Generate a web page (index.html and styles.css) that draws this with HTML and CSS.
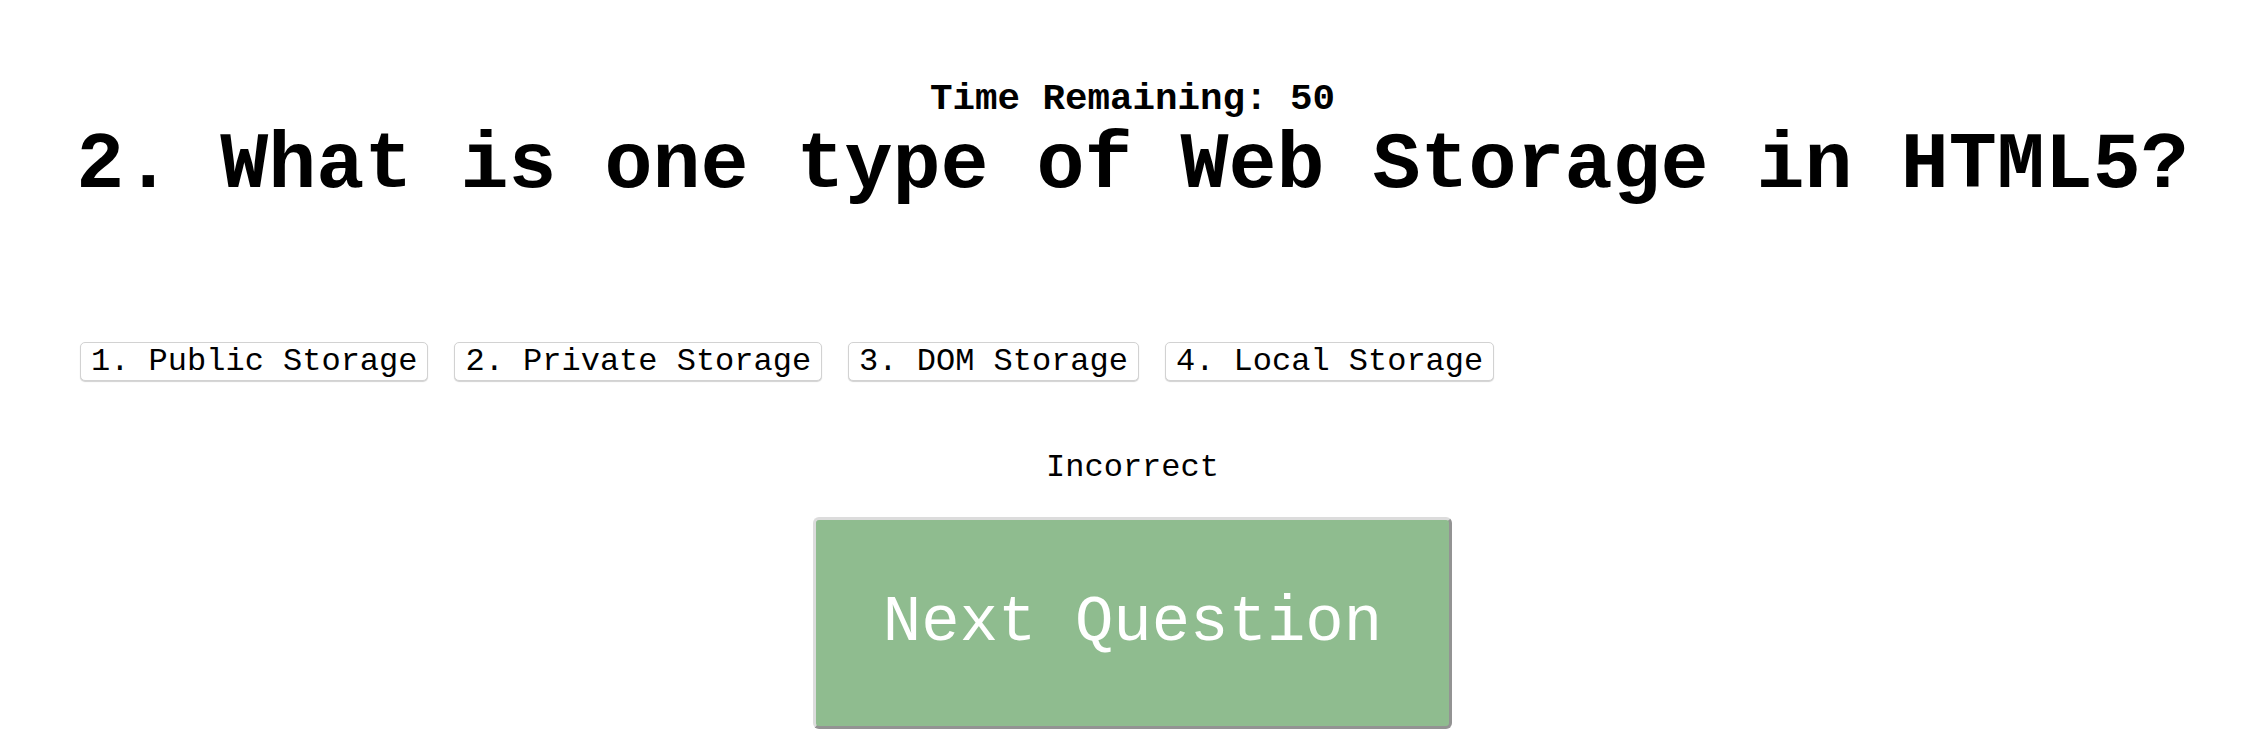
FILE: index.html
```html
<!DOCTYPE html>
<html lang="en">
<head>
<meta charset="utf-8">
<title>Quiz</title>
<link rel="stylesheet" href="styles.css">
</head>
<body>
  <main class="quiz">
    <div class="timer">Time Remaining: 50</div>
    <h1 class="question">2. What is one type of Web Storage in HTML5?</h1>
    <div class="choices">
      <button class="choice">1. Public Storage</button>
      <button class="choice">2. Private Storage</button>
      <button class="choice">3. DOM Storage</button>
      <button class="choice">4. Local Storage</button>
    </div>
    <p class="feedback">Incorrect</p>
    <div class="next-wrap">
      <button class="next">Next Question</button>
    </div>
  </main>
</body>
</html>
```

FILE: styles.css
```css
html, body {
  margin: 0;
  padding: 0;
  background: #ffffff;
}

body {
  font-family: "Courier New", "Liberation Mono", monospace;
  color: #000;
}

.quiz {
  display: flex;
  flex-direction: column;
  padding-top: 78px;
  padding-left: 7px;
}

.timer {
  text-align: center;
  font-weight: bold;
  font-size: 37.5px;
  line-height: 42px;
}

.question {
  margin: 0;
  text-align: center;
  font-size: 80px;
  font-weight: bold;
  line-height: 91px;
  white-space: nowrap;
}

.choices {
  display: flex;
  gap: 26px;
  padding-left: 73px;
  margin-top: 131px;
}

.choice {
  font-family: inherit;
  font-size: 32px;
  line-height: 37px;
  padding: 0 10px;
  background: #fff;
  color: #000;
  border: 1px solid #d2d2d2;
  border-radius: 5px;
  box-shadow: 0 1px 1px rgba(0, 0, 0, 0.18);
}

.feedback {
  margin: 69px 0 0;
  text-align: center;
  font-size: 32px;
  line-height: 36px;
}

.next-wrap {
  display: flex;
  justify-content: center;
  margin-top: 31px;
}

.next {
  font-family: inherit;
  font-size: 64px;
  line-height: 72px;
  padding: 67px 67px;
  color: #ffffff;
  background: #8fbc8f;
  border: 3px solid;
  border-color: #dcdcdc #939393 #939393 #dcdcdc;
  border-radius: 6px;
}
```
